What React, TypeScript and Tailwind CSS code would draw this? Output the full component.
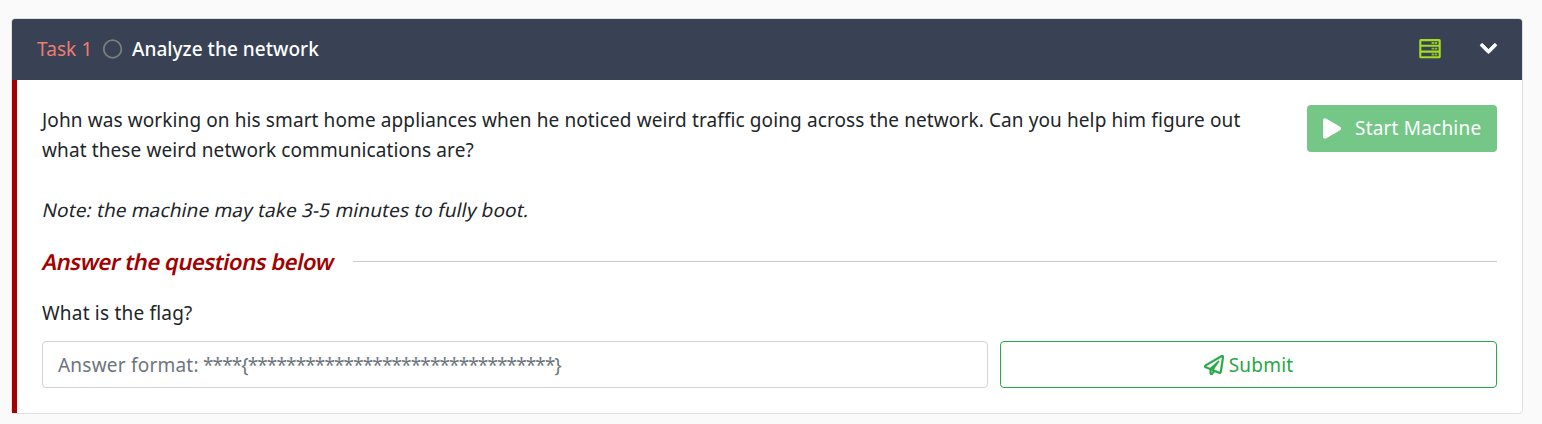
import { FaChevronDown, FaPlay, FaRegPaperPlane } from "react-icons/fa";

function ServerIcon() {
  return (
    <svg className="mb-[2px] h-5 w-[22px]" viewBox="0 0 22 20" fill="none" stroke="#a4dc22" strokeWidth="2.1" strokeLinejoin="round">
      <rect x="1.3" y="1.1" width="19.4" height="17.2" rx="0.6" />
      <path d="M1.3 6.8h19.4M1.3 12.6h19.4" />
      <path d="M12.6 4h2.7M15.9 4h2.3M12.6 9.7h2.7M15.9 9.7h2.3M12.6 15.5h2.7M15.9 15.5h2.3" strokeWidth="1.8" opacity=".8" />
    </svg>
  );
}

function TaskHeader() {
  return (
    <header className="flex h-[61px] items-center rounded-t-[3px] bg-[#384254] pr-6 pl-[25px] text-[19px]">
      <span className="w-[66px] whitespace-nowrap tracking-[0.1px] text-[#ef7b73]">Task 1</span>
      <svg className="mb-[2px] h-5 w-5" viewBox="0 0 20 20" fill="none" stroke="#7c7c7c" strokeWidth="1.8">
        <circle cx="9.6" cy="10" r="8.8" />
      </svg>
      <h1 className="ml-[9px] whitespace-nowrap font-medium tracking-[0.04px] text-white">Analyze the network</h1>
      <div className="ml-auto flex items-center gap-[38px]">
        <ServerIcon />
        <FaChevronDown className="mb-[2px] h-[19px] w-[19px] text-white" stroke="white" strokeWidth="24" />
      </div>
    </header>
  );
}

export default function App() {
  return (
    <main className="h-[424px] bg-[#fafafa] pt-[18px] pl-[11px] font-['Noto_Sans',sans-serif] text-[#212529]">
      <section className="flex h-[396px] w-[1512px] flex-col rounded border border-[#dfdfdf] bg-white">
        <TaskHeader />
        <div className="flex-1 border-l-[5px] border-[#a30000] p-[25px]">
          <div className="flex items-start justify-between">
            <div className="text-[19px] leading-[30px]">
              <p className="whitespace-nowrap tracking-[0.105px]">
                John was working on his smart home appliances when he noticed weird traffic going across the network. Can you help him figure out
              </p>
              <p className="tracking-[0.11px]">what these weird network communications are?</p>
              <p className="mt-[30px] ml-px w-fit -skew-x-12 tracking-[0.14px]">Note: the machine may take 3-5 minutes to fully boot.</p>
            </div>
            <button className="flex h-[47px] w-[190px] shrink-0 items-center rounded bg-[#75c787] pl-4 text-[19px] text-white">
              <FaPlay className="h-[21px] w-[18px]" />
              <span className="ml-[14px] whitespace-nowrap tracking-[0.2px]">Start Machine</span>
            </button>
          </div>
          <div className="mt-[21px] flex h-[30px] items-center">
            <h2 className="ml-px w-[310px] -skew-x-12 whitespace-nowrap text-[22px] font-semibold tracking-[-0.45px] text-[#a30000]">Answer the questions below</h2>
            <div className="h-px flex-1 bg-[#cbcbcb]" />
          </div>
          <p className="mt-[22px] text-[19px] leading-[30px] tracking-[0.2px]">What is the flag?</p>
          <div className="mt-[13px] flex gap-3">
            <div role="textbox" className="flex h-[47px] w-[946px] items-center whitespace-nowrap rounded border border-[#ced4da] pt-[2px] pl-[15px] text-[19px] text-[#6c757d]">
              <span className="w-[145px] tracking-[0.22px]">Answer format:</span>
              <span className="tracking-[-0.88px]">{"****{********************************}"}</span>
            </div>
            <button className="flex h-[47px] w-[497px] items-center justify-center gap-[5px] rounded border border-[#28a745] text-[19px] text-[#28a745]">
              <FaRegPaperPlane className="h-5 w-5" stroke="currentColor" strokeWidth="8" />
              <span className="pt-[2px] tracking-[0.2px]">Submit</span>
            </button>
          </div>
        </div>
      </section>
    </main>
  );
}
